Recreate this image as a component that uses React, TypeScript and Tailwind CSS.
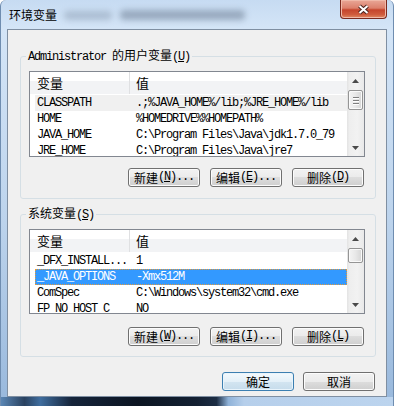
import type { ReactNode } from "react";

interface VarRow {
  name: string;
  value: string;
  state?: "selected" | "inactive";
}

const mono = "font-['Liberation_Mono','Noto_Sans_CJK_SC',monospace] text-[12px] tracking-[-1.2px]";
const cjk = "font-['Noto_Sans_CJK_SC',sans-serif] text-[12px]";

const userVars: VarRow[] = [
  { name: "CLASSPATH", value: ".;%JAVA_HOME%/lib;%JRE_HOME%/lib", state: "inactive" },
  { name: "HOME", value: "%HOMEDRIVE%%HOMEPATH%" },
  { name: "JAVA_HOME", value: "C:\\Program Files\\Java\\jdk1.7.0_79" },
  { name: "JRE_HOME", value: "C:\\Program Files\\Java\\jre7" },
];

const sysVars: VarRow[] = [
  { name: "_DFX_INSTALL...", value: "1" },
  { name: "_JAVA_OPTIONS", value: "-Xmx512M", state: "selected" },
  { name: "ComSpec", value: "C:\\Windows\\system32\\cmd.exe" },
  { name: "FP_NO_HOST_C", value: "NO" },
];

// underlined access key, e.g. (N)
const Acc = ({ k }: { k: string }) => (
  <span className={mono}>
    (<span className="underline underline-offset-[1px]">{k}</span>)
  </span>
);

const Arrow = ({ down }: { down?: boolean }) => (
  <svg width="7" height="4" viewBox="0 0 7 4">
    <path d={down ? "M0 0H7L3.5 4Z" : "M3.5 0L7 4H0Z"} fill="#4a4a4a" />
  </svg>
);

const ScrollBar = ({ thumb, grip }: { thumb: string; grip?: boolean }) => (
  <div className="w-[17px] flex flex-col bg-[linear-gradient(to_right,#e3e3e3_0%,#eeeeee_15%,#f2f2f2_60%,#e9e9e9_100%)]">
    <div className="h-[17px] flex items-center justify-center">
      <Arrow />
    </div>
    <div
      className={`mt-[1px] mx-[1px] rounded-[2px] border border-[#959595] bg-[linear-gradient(to_right,#f4f4f4,#e8e8e8_50%,#d5d5d5)] shadow-[inset_0_0_0_1px_#fafafa] flex flex-col items-center justify-center gap-[2px] ${thumb}`}
    >
      {grip && (
        <>
          <div className="w-[6px] h-[1px] bg-[#7f7f7f] shadow-[0_1px_0_#ffffff]" />
          <div className="w-[6px] h-[1px] bg-[#7f7f7f] shadow-[0_1px_0_#ffffff]" />
          <div className="w-[6px] h-[1px] bg-[#7f7f7f] shadow-[0_1px_0_#ffffff]" />
        </>
      )}
    </div>
    <div className="flex-1" />
    <div className="h-[17px] flex items-center justify-center">
      <Arrow down />
    </div>
  </div>
);

const VarList = ({ rows, height, thumb, grip }: { rows: VarRow[]; height: string; thumb: string; grip?: boolean }) => (
  <div className={`border border-[#828790] bg-white flex ${height}`}>
    <div className="flex-1 overflow-hidden">
      <div className={`h-[22px] flex bg-[linear-gradient(to_bottom,#ffffff_0%,#ffffff_42%,#f2f3f5_42%,#f2f3f5_100%)] font-['Noto_Sans_CJK_SC',sans-serif] text-[13px]`}>
        <div className="w-[100px] border-r border-[#dfe0e2] pl-[7px] flex items-center">变量</div>
        <div className="pl-[6px] flex items-center">值</div>
      </div>
      <div className="pt-[1px]">
        {rows.map((r) => (
          <div
            key={r.name}
            className={`ml-[5px] h-[16px] flex items-center whitespace-nowrap ${mono} ${
              r.state === "selected"
                ? "bg-[#3399ff] text-white outline-1 outline-dotted -outline-offset-1 outline-[#e39a3b]"
                : r.state === "inactive"
                ? "bg-[#f0f0f0] text-black"
                : "text-black"
            }`}
          >
            <div className="w-[101px] shrink-0 pl-[2px]">{r.name}</div>
            <div>{r.value}</div>
          </div>
        ))}
      </div>
    </div>
    <ScrollBar thumb={thumb} grip={grip} />
  </div>
);

const Btn = ({ children, primary }: { children: ReactNode; primary?: boolean }) => (
  <button
    className={`w-[72px] h-[19px] rounded-[3px] border flex items-center justify-center text-black ${cjk} leading-[17px] ${
      primary
        ? "border-[#3c7fb1] bg-[linear-gradient(to_bottom,#f3f9fd_0%,#e4f0f8_50%,#d3e5f1_50%,#c6dceb_100%)] shadow-[inset_0_0_0_1px_#e9f4fb]"
        : "border-[#707070] bg-[linear-gradient(to_bottom,#f2f2f2_0%,#ebebeb_50%,#dddddd_50%,#cfcfcf_100%)] shadow-[inset_0_0_0_1px_#fcfcfc]"
    }`}
  >
    {children}
  </button>
);

const Dots = () => <span className={mono}>...</span>;

const GroupBox = ({ legend, children, className }: { legend: ReactNode; children: ReactNode; className: string }) => (
  <fieldset className={`ml-[12px] mr-[10px] border border-[#d5dfe5] rounded-[3px] pl-[8px] pr-[10px] pt-[7px] ${className}`}>
    <legend className={`-ml-[3px] px-[2px] leading-[14px] text-black ${cjk}`}>{legend}</legend>
    {children}
  </fieldset>
);

export default function App() {
  return (
    <div className="w-[394px] h-[406px] flex flex-col overflow-hidden border-x border-[#6f8db0] rounded-t-[6px] bg-[linear-gradient(to_bottom,#c6dbf2_0%,#d4e5f7_7%,#bcd3ec_55%,#98b8dc_100%)] font-['Noto_Sans_CJK_SC',sans-serif]">
      {/* title bar */}
      <div className="h-[29px] flex items-start pl-[8px]">
        <span className={`mt-[7px] leading-[16px] text-black ${cjk}`}>环境变量</span>
        <div className="mt-[10px] ml-[7px] flex items-center gap-[8px] opacity-50">
          <div className="w-[48px] h-[9px] rounded bg-[#8a9bb0] blur-[3px]" />
          <div className="w-[125px] h-[10px] rounded bg-[#627389] blur-[3px]" />
        </div>
        <div className="flex-1" />
        <div className="mr-[6px] w-[47px] h-[19px] rounded-b-[4px] border border-t-0 border-[#7a2a1f] bg-[linear-gradient(to_bottom,#e9a797_0%,#dc806c_45%,#c5452c_55%,#cf5a3c_80%,#e08a62_100%)] shadow-[inset_0_0_0_1px_#f0b9a9] flex items-center justify-center">
          <svg width="13" height="11" viewBox="0 0 13 11">
            <path d="M2.5 2L10.5 9M10.5 2L2.5 9" stroke="#4a2520" strokeWidth="4" />
            <path d="M2.5 2L10.5 9M10.5 2L2.5 9" stroke="#ffffff" strokeWidth="2" />
          </svg>
        </div>
      </div>

      {/* client area */}
      <div className="px-[6px]">
        <div className="h-[368px] border border-[#7f8fa2] bg-[#f0f0f0] flex flex-col">
          <GroupBox
            className="mt-[18px] pb-[11px]"
            legend={
              <>
                <span className={mono}>Administrator </span>
                的用户变量
                <Acc k="U" />
              </>
            }
          >
            <VarList rows={userVars} height="h-[86px]" thumb="h-[20px]" grip />
            <div className="mt-[11px] flex justify-end gap-[10px] pr-[1px]">
              <Btn>
                新建<Acc k="N" />
                <Dots />
              </Btn>
              <Btn>
                编辑<Acc k="E" />
                <Dots />
              </Btn>
              <Btn>
                删除<Acc k="D" />
              </Btn>
            </div>
          </GroupBox>

          <GroupBox
            className="mt-[7px] pb-[10px]"
            legend={
              <>
                系统变量
                <Acc k="S" />
              </>
            }
          >
            <VarList rows={sysVars} height="h-[85px]" thumb="h-[15px]" />
            <div className="mt-[13px] flex justify-end gap-[10px] pr-[1px]">
              <Btn>
                新建<Acc k="W" />
                <Dots />
              </Btn>
              <Btn>
                编辑<Acc k="I" />
                <Dots />
              </Btn>
              <Btn>
                删除<Acc k="L" />
              </Btn>
            </div>
          </GroupBox>

          <div className="mt-[15px] flex justify-end gap-[9px] pr-[11px]">
            <Btn primary>确定</Btn>
            <Btn>取消</Btn>
          </div>
        </div>
      </div>

      {/* bottom frame */}
      <div className="h-[9px] bg-[linear-gradient(to_right,#5a86b4_0%,#2a4260_6%,#3f6d9e_10%,#15243a_18%,#0c1522_35%,#132032_50%,#1c2d44_55%,#8fb2d8_58%,#b6cfeb_62%,#bcd4ee_100%)]" />
    </div>
  );
}
